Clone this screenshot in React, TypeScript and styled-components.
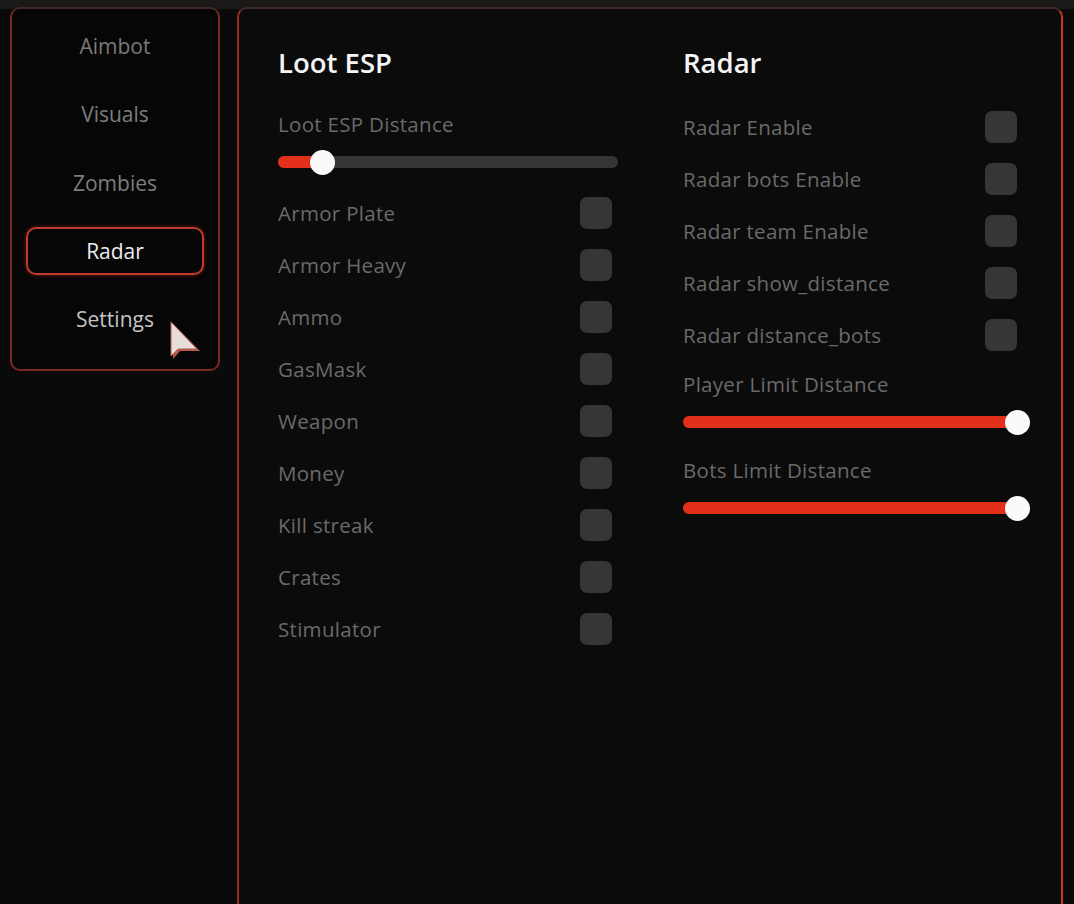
import React from "react";
import styled, { createGlobalStyle } from "styled-components";

const Global = createGlobalStyle`
  html, body { margin: 0; padding: 0; background: #0a0a0a; }
  body { font-family: "Open Sans", Lato, sans-serif; overflow: hidden; }
  * { box-sizing: border-box; }
`;

const Page = styled.div`
  width: 1074px;
  height: 904px;
  overflow: hidden;
  background: linear-gradient(#1b1818 0, #1b1818 9px, #0a0a0a 9px);
  display: flex;
  align-items: flex-start;
  gap: 17px;
  padding: 7px 0 0 10px;
`;

const Sidebar = styled.nav`
  position: relative;
  width: 210px;
  height: 364px;
  background: #060606;
  border: 2px solid #7a2822;
  border-top-color: #3d2a28;
  border-radius: 10px;
  display: flex;
  flex-direction: column;
  align-items: center;
  padding: 13px 14px 0;
  gap: 20.3px;
`;

const NavItem = styled.div<{ $active?: boolean; $tone?: string }>`
  width: 178px;
  height: 48px;
  display: flex;
  align-items: center;
  justify-content: center;
  font-size: 21px;
  color: ${(p) => (p.$active ? "#ececec" : p.$tone || "#7d7d7d")};
  border-radius: 10px;
  border: 2px solid ${(p) => (p.$active ? "#c23a2c" : "transparent")};
  box-shadow: ${(p) => (p.$active ? "0 0 4px rgba(200,50,40,0.5)" : "none")};
`;

const Cursor = styled.svg`
  position: absolute;
  left: 148px;
  top: 306px;
`;

const Main = styled.main`
  width: 826px;
  height: 940px;
  background: #0b0b0b;
  border: 2px solid #a02c20;
  border-right-color: #c8361f;
  border-top-color: #3d2a28;
  border-radius: 10px;
  display: grid;
  grid-template-columns: 340px 334px;
  column-gap: 65px;
  padding: 37px 0 0 39px;
  align-content: start;
`;

const Column = styled.section`
  display: flex;
  flex-direction: column;
`;

const Title = styled.h2`
  margin: 0;
  height: 34px;
  line-height: 34px;
  font-size: 27.5px;
  font-weight: 600;
  color: #f4f4f4;
`;

const Label = styled.div<{ $mt: number }>`
  margin-top: ${(p) => p.$mt}px;
  height: 24px;
  line-height: 24px;
  font-size: 20.5px;
  letter-spacing: 0.3px;
  color: #6a6a6a;
`;

const Row = styled.div<{ $mr?: number }>`
  height: 52px;
  display: flex;
  align-items: center;
  justify-content: space-between;
  padding-right: ${(p) => p.$mr || 0}px;
  font-size: 20.5px;
  letter-spacing: 0.3px;
  color: #6a6a6a;
`;

const Rows = styled.div<{ $mt: number }>`
  margin-top: ${(p) => p.$mt}px;
  display: flex;
  flex-direction: column;
`;

const Box = styled.div`
  width: 32px;
  height: 32px;
  border-radius: 7px;
  background: #363636;
`;

const SliderWrap = styled.div<{ $mt: number }>`
  margin-top: ${(p) => p.$mt}px;
  height: 24px;
  position: relative;
  display: flex;
  align-items: center;
`;

const Track = styled.div`
  width: 100%;
  height: 12px;
  border-radius: 6px;
  background: #353535;
  overflow: hidden;
`;

const Fill = styled.div`
  height: 100%;
  background: #e2301a;
  box-shadow: 0 0 6px rgba(230, 50, 25, 0.6);
`;

const Thumb = styled.div`
  position: absolute;
  top: 0;
  width: 25px;
  height: 25px;
  margin-left: -12px;
  border-radius: 50%;
  background: #fafafa;
`;

function Slider({ value, mt }: { value: number; mt: number }) {
  return (
    <SliderWrap $mt={mt}>
      <Track>
        <Fill style={{ width: `${value}%` }} />
      </Track>
      <Thumb style={{ left: `${value}%` }} />
    </SliderWrap>
  );
}

const lootItems = [
  "Armor Plate",
  "Armor Heavy",
  "Ammo",
  "GasMask",
  "Weapon",
  "Money",
  "Kill streak",
  "Crates",
  "Stimulator",
];

const radarItems = [
  "Radar Enable",
  "Radar bots Enable",
  "Radar team Enable",
  "Radar show_distance",
  "Radar distance_bots",
];

const nav: { name: string; tone?: string; active?: boolean }[] = [
  { name: "Aimbot", tone: "#7a7a7a" },
  { name: "Visuals", tone: "#7d7d7d" },
  { name: "Zombies", tone: "#7d7d7d" },
  { name: "Radar", active: true },
  { name: "Settings", tone: "#c4c4c4" },
];

export default function App() {
  return (
    <>
      <Global />
      <Page>
        <Sidebar>
          {nav.map((n) => (
            <NavItem key={n.name} $active={n.active} $tone={n.tone}>
              {n.name}
            </NavItem>
          ))}
          <Cursor width="44" height="50" viewBox="0 0 44 50">
            <path d="M13 9 L13 44 L20 36 L40 36 Z" fill="#b85a48" />
            <path d="M11 7 L11 41 L18 34 L37 34 Z" fill="#e8ddd8" stroke="#a86050" strokeWidth="1" />
          </Cursor>
        </Sidebar>
        <Main>
          <Column>
            <Title>Loot ESP</Title>
            <Label $mt={32}>Loot ESP Distance</Label>
            <Slider value={13} mt={14} />
            <Rows $mt={13}>
              {lootItems.map((t) => (
                <Row key={t} $mr={6}>
                  <span>{t}</span>
                  <Box />
                </Row>
              ))}
            </Rows>
          </Column>
          <Column>
            <Title>Radar</Title>
            <Rows $mt={21}>
              {radarItems.map((t) => (
                <Row key={t}>
                  <span>{t}</span>
                  <Box />
                </Row>
              ))}
            </Rows>
            <Label $mt={11}>Player Limit Distance</Label>
            <Slider value={100} mt={14} />
            <Label $mt={24}>Bots Limit Distance</Label>
            <Slider value={100} mt={14} />
          </Column>
        </Main>
      </Page>
    </>
  );
}
